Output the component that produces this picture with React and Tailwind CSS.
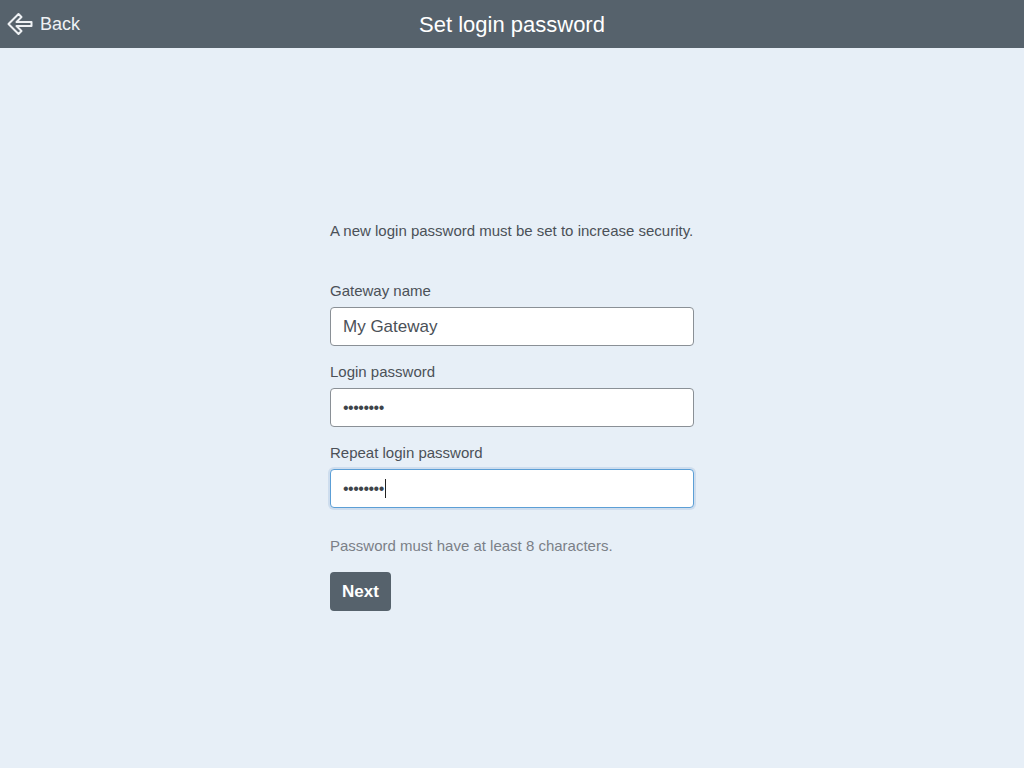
import React from "react";

function BackIcon() {
  return (
    <svg width="26" height="26" viewBox="0 0 26 26" fill="none" className="block">
      <path
        d="M1.5 13 L11.5 3 L14.5 6 L9.5 11 L24.5 11 L24.5 15 L9.5 15 L14.5 20 L11.5 23 Z"
        stroke="#eef1f4"
        strokeWidth="2"
        strokeLinejoin="round"
      />
    </svg>
  );
}

function Field({ label, children, focused }) {
  return (
    <div className="flex flex-col">
      <label className="text-[15px] leading-[18px] text-[#4b5158] mb-[7px]">{label}</label>
      <div
        className={
          "h-[39px] w-full rounded-[4px] bg-white flex items-center px-[12px] " +
          (focused
            ? "border border-[#5c9fd6] shadow-[0_0_0_2px_rgba(160,190,220,0.35)]"
            : "border border-[#8a9096]")
        }
      >
        {children}
      </div>
    </div>
  );
}

export default function App() {
  return (
    <div
      className="min-h-[768px] w-full bg-[#e7eff7] flex flex-col"
      style={{ fontFamily: '"Liberation Sans", Arial, sans-serif' }}
    >
      <header className="h-[48px] bg-[#56626c] flex items-center relative">
        <div className="flex items-center pl-[7px] gap-[7px] text-[#eef1f4]">
          <BackIcon />
          <span className="text-[18px]">Back</span>
        </div>
        <h1 className="absolute left-0 right-0 text-center text-[22px] text-white pointer-events-none">
          Set login password
        </h1>
      </header>
      <main className="flex justify-center">
        <div className="w-[364px] pt-[174px]">
          <p className="text-[15px] leading-[18px] text-[#4b5158]">
            A new login password must be set to increase security.
          </p>
          <div className="mt-[42px] flex flex-col gap-[17px]">
            <Field label="Gateway name">
              <span className="text-[17px] text-[#4b5158]">My Gateway</span>
            </Field>
            <Field label="Login password">
              <span className="text-[16px] text-[#3e444a] tracking-[-0.5px]">••••••••</span>
            </Field>
            <Field label="Repeat login password" focused>
              <span className="text-[16px] text-[#3e444a] tracking-[-0.5px]">••••••••</span>
              <span className="inline-block w-px h-[19px] bg-[#222] ml-[1px]"></span>
            </Field>
          </div>
          <p className="mt-[29px] text-[15px] leading-[18px] text-[#7b8087]">
            Password must have at least 8 characters.
          </p>
          <button className="mt-[17px] h-[39px] w-[61px] rounded-[4px] bg-[#56626c] text-white font-bold text-[17px]">
            Next
          </button>
        </div>
      </main>
    </div>
  );
}
